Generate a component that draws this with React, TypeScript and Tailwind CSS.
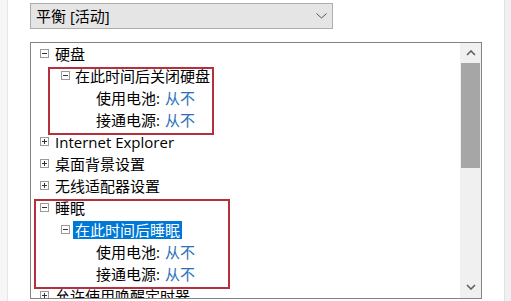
import React from "react";

const FONT = { fontFamily: '"Open Sans", "Noto Sans CJK SC", sans-serif' };

function Box({ plus }: { plus?: boolean }) {
  return (
    <svg width="9" height="9" viewBox="0 0 9 9" className="shrink-0">
      <rect x="0.5" y="0.5" width="8" height="8" fill="#fff" stroke="#9a9a9a" />
      <line x1="2" y1="4.5" x2="7" y2="4.5" stroke="#333" />
      {plus && <line x1="4.5" y1="2" x2="4.5" y2="7" stroke="#333" />}
    </svg>
  );
}

type Row = {
  level: number;
  text: string;
  value?: string;
  box?: "plus" | "minus";
  selected?: boolean;
};

const rows: Row[] = [
  { level: 0, text: "硬盘", box: "minus" },
  { level: 1, text: "在此时间后关闭硬盘", box: "minus" },
  { level: 2, text: "使用电池:", value: "从不" },
  { level: 2, text: "接通电源:", value: "从不" },
  { level: 0, text: "Internet Explorer", box: "plus" },
  { level: 0, text: "桌面背景设置", box: "plus" },
  { level: 0, text: "无线适配器设置", box: "plus" },
  { level: 0, text: "睡眠", box: "minus" },
  { level: 1, text: "在此时间后睡眠", box: "minus", selected: true },
  { level: 2, text: "使用电池:", value: "从不" },
  { level: 2, text: "接通电源:", value: "从不" },
  { level: 0, text: "允许使用唤醒定时器", box: "plus" },
];

function TreeRow({ r }: { r: Row }) {
  const boxLeft = r.level === 0 ? 9 : 30;
  const textLeft = r.level === 0 ? 24 : r.level === 1 ? 44 : 65;
  return (
    <div className="relative h-[22px] shrink-0 flex items-center">
      {r.box && (
        <div className="absolute top-[6px]" style={{ left: boxLeft }}>
          <Box plus={r.box === "plus"} />
        </div>
      )}
      <div
        className={
          "absolute top-[2px] h-[18px] flex items-center whitespace-nowrap text-[15px] leading-[18px] " +
          (r.selected ? "bg-[#0078d7] text-white px-[2px]" : "text-black")
        }
        style={{ left: r.selected ? textLeft - 2 : textLeft }}
      >
        <span>{r.text}</span>
        {r.value && <span className="text-[#2a70b8] ml-[5px]">{r.value}</span>}
      </div>
    </div>
  );
}

function Chevron({ up }: { up?: boolean }) {
  return (
    <svg width="10" height="6" viewBox="0 0 10 6">
      <path
        d={up ? "M1 5 L5 1 L9 5" : "M1 1 L5 5 L9 1"}
        fill="none"
        stroke="#606060"
        strokeWidth="1.6"
      />
    </svg>
  );
}

export default function App() {
  return (
    <div className="w-[511px] h-[301px] bg-white flex overflow-hidden" style={FONT}>
      <div className="w-[8px] h-full bg-[#f6f6f6] border-r border-[#e6e6e6] shrink-0" />
      <div className="flex-1 flex flex-col pl-[22px] pt-[3px]">
        <div className="w-[303px] h-[26px] bg-[#e5e5e5] border border-[#adadad] flex items-center justify-between pl-[5px] pr-[5px]">
          <span className="text-[15px] text-black leading-[20px]">平衡 [活动]</span>
          <svg width="11" height="6" viewBox="0 0 11 6">
            <path d="M0.5 0.5 L5.5 5 L10.5 0.5" fill="none" stroke="#555" strokeWidth="1" />
          </svg>
        </div>
        <div className="mt-[13px] w-[452px] h-[257px] border border-[#838383] flex relative">
          <div className="flex-1 flex flex-col overflow-hidden relative">
            {rows.map((r, i) => (
              <TreeRow key={i} r={r} />
            ))}
          </div>
          <div className="w-[21px] h-full bg-[#f0f0f0] flex flex-col items-center shrink-0">
            <div className="h-[20px] w-full flex items-center justify-center">
              <Chevron up />
            </div>
            <div className="h-[105px] w-[19px] bg-[#a6a6a6]" />
            <div className="flex-1" />
            <div className="h-[22px] w-full flex items-center justify-center">
              <Chevron />
            </div>
          </div>
          <div className="absolute left-[17px] top-[24px] w-[166px] h-[68px] border-2 border-[#b5303c]" />
          <div className="absolute left-[3px] top-[156px] w-[196px] h-[90px] border-2 border-[#b5303c]" />
        </div>
      </div>
      <div className="w-[7px] h-full bg-[#f0f0f0] border-l border-[#e2e2e2] shrink-0" />
    </div>
  );
}
